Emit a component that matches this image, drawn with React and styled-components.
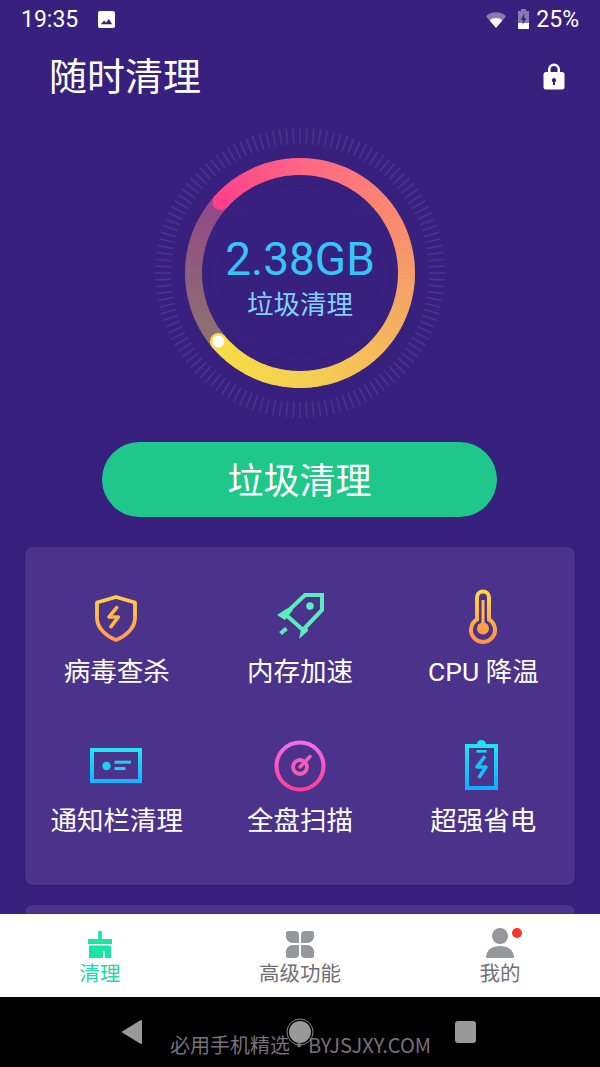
import React from 'react';
import styled, { createGlobalStyle } from 'styled-components';

const GlobalStyle = createGlobalStyle`
  html, body { margin: 0; padding: 0; background: #38207f; }
  * { box-sizing: border-box; }
  body { font-family: Roboto, "Noto Sans CJK SC", sans-serif; }
`;

const Screen = styled.div`
  position: relative;
  width: 600px;
  height: 1067px;
  display: flex;
  flex-direction: column;
  overflow: hidden;
  background: #38207f;
`;

const StatusBar = styled.div`
  height: 38px;
  flex: none;
  display: flex;
  align-items: center;
  padding: 0 21px;
  color: #fff;
  font-size: 23px;
  font-weight: 400;
`;

const StatusTime = styled.span`
  margin-right: 20px;
`;

const StatusRight = styled.div`
  margin-left: auto;
  display: flex;
  align-items: center;
  gap: 6px;
`;

const Header = styled.div`
  height: 76px;
  flex: none;
  display: flex;
  align-items: center;
  justify-content: space-between;
  padding: 0 34px 0 49px;
`;

const Title = styled.h1`
  margin: 0 0 6px;
  font-size: 38px;
  font-weight: 400;
  color: #fff;
`;

const Gauge = styled.div`
  flex: none;
  width: 300px;
  height: 300px;
  margin: 9px auto 0;
  display: grid;
  place-items: center;
  > * { grid-area: 1 / 1; }
`;

const GaugeText = styled.div`
  display: flex;
  flex-direction: column;
  align-items: center;
  margin-top: 9px;
`;

const GaugeValue = styled.div`
  font-size: 46px;
  line-height: 54px;
  color: #35c6f7;
`;

const GaugeLabel = styled.div`
  font-size: 26.5px;
  line-height: 38px;
  color: #7fd2f9;
`;

const CleanButton = styled.button`
  flex: none;
  display: block;
  width: 395px;
  height: 75px;
  margin: 19px 103px 30px 102px;
  padding: 0 0 4px;
  border: 0;
  border-radius: 38px;
  background: #1fc88a;
  color: #fff;
  font-family: inherit;
  font-size: 36px;
`;

const Scroll = styled.div`
  flex: 1;
  min-height: 0;
  overflow: hidden;
  padding: 0 25px;
`;

const Card = styled.div`
  border-radius: 8px;
  background: #4b338c;
  box-shadow: 0 1px 3px rgba(30, 15, 80, 0.35);
  margin-bottom: 20px;
`;

const ToolGrid = styled.div`
  display: grid;
  grid-template-columns: repeat(3, 1fr);
  row-gap: 51px;
  padding: 42px 0 49px;
`;

const Tool = styled.div`
  display: flex;
  flex-direction: column;
  align-items: center;
  gap: 12px;
`;

const ToolIcon = styled.svg`
  display: block;
  width: 56px;
  height: 56px;
`;

const ToolLabel = styled.div`
  font-size: 26.5px;
  line-height: 30px;
  color: #fff;
  white-space: nowrap;
`;

const EmptyCard = styled(Card)`
  height: 80px;
`;

const TabBar = styled.div`
  height: 83px;
  flex: none;
  display: grid;
  grid-template-columns: repeat(3, 200px);
  background: #fff;
`;

const Tab = styled.div`
  position: relative;
  display: flex;
  flex-direction: column;
  align-items: center;
  padding-top: 13px;
  font-size: 20.5px;
  line-height: 26px;
  color: ${p => (p.$active ? '#1ed9a8' : '#6f6f74')};
`;

const TabIcon = styled.svg`
  display: block;
  width: 36px;
  height: 34px;
`;

const Badge = styled.span`
  position: absolute;
  left: 112px;
  top: 14px;
  width: 10px;
  height: 10px;
  border-radius: 50%;
  background: #f5352e;
`;

const NavBar = styled.div`
  height: 70px;
  flex: none;
  display: grid;
  grid-template-columns: repeat(3, 167px);
  justify-content: center;
  align-items: center;
  justify-items: center;
  background: #000;
`;

const Watermark = styled.div`
  position: absolute;
  left: 170px;
  top: 1032px;
  font-family: "Noto Sans CJK SC", sans-serif;
  font-size: 20px;
  line-height: 26px;
  word-spacing: -5.5px;
  color: #7a6f7c;
  white-space: nowrap;
`;

// colour stops along the bright arc, from the white dot round to the pink end
const arcStops = [
  [0, [246, 222, 70]],
  [0.22, [245, 205, 82]],
  [0.42, [244, 172, 98]],
  [0.6, [250, 140, 110]],
  [0.8, [255, 106, 130]],
  [1, [255, 64, 138]],
];

const mix = (stops, t) => {
  for (let i = 1; i < stops.length; i++) {
    if (t <= stops[i][0]) {
      const [t0, c0] = stops[i - 1];
      const [t1, c1] = stops[i];
      const k = (t - t0) / (t1 - t0);
      return `rgb(${c0.map((c, n) => Math.round(c + (c1[n] - c) * k)).join(',')})`;
    }
  }
  return `rgb(${stops[stops.length - 1][1].join(',')})`;
};

const polar = (r, deg) => {
  const a = (deg * Math.PI) / 180;
  return [150 + r * Math.cos(a), 150 + r * Math.sin(a)];
};

const R = 106.5;
const START = 140; // screen angle of the white dot
const END = 222 - 360; // screen angle of the pink end, going through the right side

const Ring = () => {
  const n = 120;
  const bright = [];
  for (let i = 0; i < n; i++) {
    const a0 = START + ((END - START) * i) / n;
    const a1 = START + ((END - START) * (i + 1.15)) / n;
    const [x0, y0] = polar(R, a0);
    const [x1, y1] = polar(R, a1);
    bright.push(
      <path
        key={i}
        d={`M${x0} ${y0}A${R} ${R} 0 0 0 ${x1} ${y1}`}
        stroke={mix(arcStops, i / n)}
      />
    );
  }
  const dim = [];
  const dimStops = [[0, [146, 72, 136]], [1, [142, 116, 110]]];
  for (let i = 0; i < 30; i++) {
    const a0 = 222 - (82 * i) / 30;
    const a1 = 222 - (82 * (i + 1.15)) / 30;
    const [x0, y0] = polar(R, a0);
    const [x1, y1] = polar(R, a1);
    dim.push(
      <path
        key={i}
        d={`M${x0} ${y0}A${R} ${R} 0 0 0 ${x1} ${y1}`}
        stroke={mix(dimStops, i / 30)}
      />
    );
  }
  const ticks = [];
  for (let i = 0; i < 132; i++) {
    const deg = (360 * i) / 132;
    const [x0, y0] = polar(129, deg);
    const [x1, y1] = polar(145, deg);
    ticks.push(<line key={i} x1={x0} y1={y0} x2={x1} y2={y1} />);
  }
  const [sx, sy] = polar(R, START);
  const [ex, ey] = polar(R, END);
  return (
    <svg width="300" height="300" viewBox="0 0 300 300">
      <g stroke="#fff" strokeOpacity="0.09" strokeWidth="1.6">{ticks}</g>
      <circle cx="150" cy="150" r="85" fill="none" stroke="#fff" strokeOpacity="0.012" strokeWidth="2" />
      <g fill="none" strokeWidth="17">{dim}</g>
      <g fill="none" strokeWidth="17">{bright}</g>
      <circle cx={ex} cy={ey} r="8.5" fill="#ff408a" />
      <circle cx={sx} cy={sy} r="8.5" fill="#f6de46" />
      <circle cx={sx} cy={sy} r="6" fill="#fff" />
    </svg>
  );
};

const Gradient = ({ id, from, to }) => (
  <linearGradient id={id} x1="0" y1="0" x2="0" y2="1" gradientUnits="objectBoundingBox">
    <stop offset="0" stopColor={from} />
    <stop offset="1" stopColor={to} />
  </linearGradient>
);

const ShieldIcon = () => (
  <ToolIcon viewBox="0 0 56 56">
    <defs><Gradient id="shield" from="#ffd04a" to="#ff9a4a" /></defs>
    <path
      d="M27 8 46 13.500V29C46 39 37 47 27 51 17 47 8 39 8 29V13.500Z"
      fill="none"
      stroke="url(#shield)"
      strokeWidth="3.800"
      strokeLinejoin="round"
    />
    <path
      d="M27.700 18.700 20 28H29.300L22 37.700"
      fill="none"
      stroke="#ffb648"
      strokeWidth="3.600"
      strokeLinecap="round"
      strokeLinejoin="round"
    />
  </ToolIcon>
);

const RocketIcon = () => (
  <ToolIcon viewBox="0 0 56 56">
    <path d="M33 6H50V21L31 41 13 25Z" fill="none" stroke="#58efb8" strokeWidth="4" />
    <g fill="#58efb8">
      <circle cx="38" cy="17" r="3.800" />
      <path d="M5 26 15 19.500 21 21 13 31Z" />
      <path d="M27 50 29 41 35 35 36 42Z" />
    </g>
    <path d="M8.500 44.500 14.500 39.500" stroke="#58efb8" strokeWidth="4.200" />
  </ToolIcon>
);

const ThermoIcon = () => (
  <ToolIcon viewBox="0 0 56 56">
    <defs>
      <Gradient id="thermo" from="#ffd84a" to="#ff9048" />
    </defs>
    <path
      d="M22 9.500a6 6 0 0 1 12 0V31.500a12 12 0 1 1-12 0Z"
      transform="translate(0 -1)"
      fill="none"
      stroke="url(#thermo)"
      strokeWidth="4"
    />
    <rect x="26.500" y="11" width="3" height="23" fill="#ffb84a" />
    <circle cx="28" cy="39.500" r="6" fill="#ff9e48" />
  </ToolIcon>
);

const NoticeIcon = () => (
  <ToolIcon viewBox="0 0 56 56">
    <defs>
      <Gradient id="notice" from="#22e4f0" to="#14b4ff" />
    </defs>
    <rect x="3" y="12" width="48" height="31" fill="none" stroke="url(#notice)" strokeWidth="4" />
    <circle cx="17.500" cy="28" r="4.200" fill="#1ad2f6" />
    <rect x="25.500" y="22.700" width="16.500" height="3" fill="#1ad2f6" />
    <rect x="25.500" y="29" width="11" height="3" fill="#1ad2f6" />
  </ToolIcon>
);

const DiskIcon = () => (
  <ToolIcon viewBox="0 0 56 56">
    <defs>
      <Gradient id="disk" from="#f46ce8" to="#ff3f94" />
    </defs>
    <circle cx="28" cy="28" r="23.500" fill="none" stroke="url(#disk)" strokeWidth="4" />
    <circle cx="28" cy="29" r="7" fill="none" stroke="#f35cb8" strokeWidth="3.800" />
    <path d="M28 29 38 18.500" stroke="#f35cb8" strokeWidth="3.400" strokeLinecap="round" />
  </ToolIcon>
);

const BatteryIcon = () => (
  <ToolIcon viewBox="0 0 56 56">
    <defs>
      <Gradient id="battery" from="#22e4f0" to="#0eb0ff" />
    </defs>
    <rect x="12" y="8" width="29" height="42" fill="none" stroke="url(#battery)" strokeWidth="4" />
    <path d="M22 6.500a4.500 4.500 0 0 1 9 0Z" fill="#22e0f0" />
    <rect x="21.500" y="12" width="10" height="2.600" fill="#1ed4f4" />
    <path
      d="M29 19.500 22 29H31L24.500 38.500"
      fill="none"
      stroke="#16c0fa"
      strokeWidth="3.600"
      strokeLinecap="round"
      strokeLinejoin="round"
    />
  </ToolIcon>
);

const tools = [
  { label: '病毒查杀', Icon: ShieldIcon },
  { label: '内存加速', Icon: RocketIcon },
  { label: 'CPU 降温', Icon: ThermoIcon },
  { label: '通知栏清理', Icon: NoticeIcon },
  { label: '全盘扫描', Icon: DiskIcon },
  { label: '超强省电', Icon: BatteryIcon },
];

export default function App() {
  return (
    <Screen>
      <GlobalStyle />
      <StatusBar>
        <StatusTime>19:35</StatusTime>
        <svg width="17" height="17" viewBox="0 0 18 18">
          <path fill="#fff" fillRule="evenodd" d="M2 0H16a2 2 0 0 1 2 2V16a2 2 0 0 1-2 2H2a2 2 0 0 1-2-2V2a2 2 0 0 1 2-2ZM3 14H15L11.500 8.500 8.500 12.500 6.500 10Z" />
        </svg>
        <StatusRight>
          <svg width="22" height="17" viewBox="0 0 24 18" style={{ marginRight: 4 }}>
            <path fill="#fff" fillOpacity="0.4" d="M1 5.500C7 -0.500 17 -0.500 23 5.500L12 18Z" />
            <path fill="#fff" d="M5 10C9 6.500 15 6.500 19 10L12 18Z" />
          </svg>
          <svg width="13" height="20" viewBox="0 0 13 20">
            <path fill="#fff" fillOpacity="0.4" d="M4 0H9V2H12V20H1V2H4Z" />
            <path fill="#fff" d="M1 14H12V20H1Z" />
            <path fill="#382080" d="M7.500 4 3.800 11H6L5.500 16 9.200 9H7Z" />
          </svg>
          <span>25%</span>
        </StatusRight>
      </StatusBar>

      <Header>
        <Title>随时清理</Title>
        <svg width="24" height="28" viewBox="0 0 24 28">
          <path fill="#fff" fillRule="evenodd" d="M6 10V7.500a6 6 0 0 1 12 0V10H20a2.500 2.500 0 0 1 2.500 2.500V25A2.500 2.500 0 0 1 20 27.500H4A2.500 2.500 0 0 1 1.500 25V12.500A2.500 2.500 0 0 1 4 10ZM8.500 10H15.500V7.500a3.500 3.500 0 0 0-7 0ZM12 16a2.200 2.200 0 0 0-1 4.150V23H13V20.150A2.200 2.200 0 0 0 12 16Z" />
        </svg>
      </Header>

      <Gauge>
        <Ring />
        <GaugeText>
          <GaugeValue>2.38GB</GaugeValue>
          <GaugeLabel>垃圾清理</GaugeLabel>
        </GaugeText>
      </Gauge>

      <CleanButton>垃圾清理</CleanButton>

      <Scroll>
        <Card>
          <ToolGrid>
            {tools.map(({ label, Icon }) => (
              <Tool key={label}>
                <Icon />
                <ToolLabel>{label}</ToolLabel>
              </Tool>
            ))}
          </ToolGrid>
        </Card>
        <EmptyCard />
      </Scroll>

      <TabBar>
        <Tab $active>
          <TabIcon viewBox="0 0 36 34">
            <path fill="#17e6a4" fillRule="evenodd" d="M16.200 4H19.800V12H30V17H6V12H16.200ZM7 18.500H29V31H23V24.500H21V31H7Z" />
          </TabIcon>
          清理
        </Tab>
        <Tab>
          <TabIcon viewBox="0 0 36 34">
            <g fill="#96979c">
              <path d="M6 4H13C15.500 4 17 5.500 17 8V16H11C7 16 4 13 4 9V6C4 5 5 4 6 4Z" />
              <path d="M30 4H23C20.500 4 19 5.500 19 8V16H25C29 16 32 13 32 9V6C32 5 31 4 30 4Z" />
              <path d="M6 31H13C15.500 31 17 29.500 17 27V18H11C7 18 4 21 4 25V29C4 30 5 31 6 31Z" />
              <path d="M30 31H23C20.500 31 19 29.500 19 27V18H25C29 18 32 21 32 25V29C32 30 31 31 30 31Z" />
            </g>
          </TabIcon>
          高级功能
        </Tab>
        <Tab>
          <TabIcon viewBox="0 0 36 34">
            <circle cx="18" cy="9" r="8" fill="#96979c" />
            <path fill="#96979c" d="M4 31C4 23 10 19 18 19S32 23 32 31Z" />
          </TabIcon>
          我的
          <Badge />
        </Tab>
      </TabBar>

      <NavBar>
        <svg width="26" height="26" viewBox="0 0 26 26">
          <path fill="#999" stroke="#999" strokeWidth="2" strokeLinejoin="round" d="M21 2V24L3 13Z" />
        </svg>
        <svg width="28" height="32" viewBox="0 0 28 32">
          <circle cx="14" cy="16" r="11" fill="#999" />
          <circle cx="14" cy="16" r="13" fill="none" stroke="#888" strokeWidth="1" />
        </svg>
        <svg width="24" height="24" viewBox="0 0 24 24">
          <rect x="0" y="1" width="21" height="22" rx="3" fill="#999" />
        </svg>
      </NavBar>
      <Watermark>必用手机精选 • BYJSJXY.COM</Watermark>
    </Screen>
  );
}
